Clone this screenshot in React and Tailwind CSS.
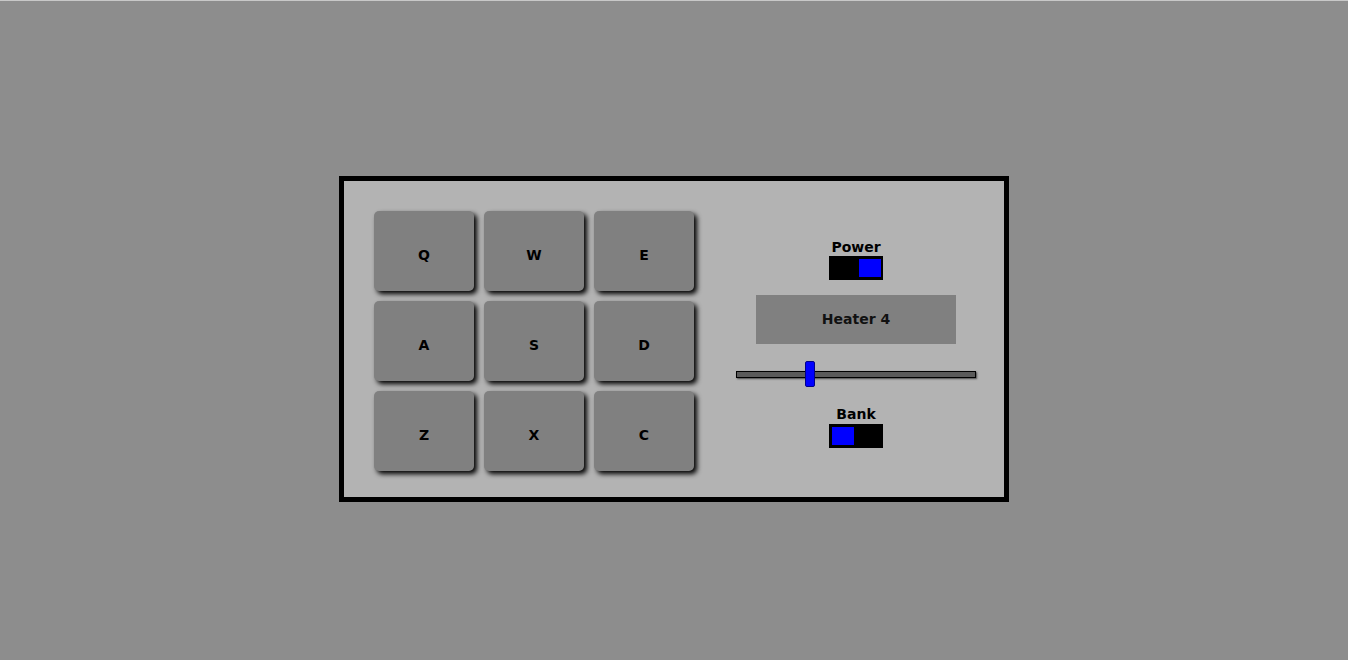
import React from 'react';

const pads = ['Q', 'W', 'E', 'A', 'S', 'D', 'Z', 'X', 'C'];

function Toggle({ on }) {
    return (
        <div className={`w-[54px] h-[24px] bg-black p-[3px] flex ${on ? 'justify-end pr-[2px]' : 'justify-start'}`}>
            <div className="w-[22px] h-[18px] bg-[#0000ff]" />
        </div>
    );
}

function DrumMachine() {
    const volume = 0.3;
    return (
        <div className="border-[5px] border-black">
            <div className="w-[660px] h-[316px] bg-[#b3b3b3] flex">
                {/* pad bank */}
                <div className="w-[350px] shrink-0 pl-[30px] pt-[30px]">
                    <div className="grid grid-cols-[repeat(3,100px)] gap-[10px]">
                        {pads.map(key => (
                            <div
                                key={key}
                                className="w-[100px] h-[80px] pt-[9px] bg-[#808080] rounded-[5px] shadow-[3px_3px_5px_black] flex items-center justify-center text-[14px] font-bold text-black"
                            >
                                {key}
                            </div>
                        ))}
                    </div>
                </div>

                {/* controls */}
                <div className="w-[310px] shrink-0 pl-[14px] pt-[58px] flex flex-col items-center">
                    <p className="text-[14px] leading-[16px] font-bold text-black">Power</p>
                    <div className="mt-[1px]"><Toggle on /></div>
                    <div className="mt-[15px] w-[200px] h-[49px] bg-[#808080] flex items-center justify-center text-[14px] font-bold text-[#111]">
                        Heater 4
                    </div>
                    <div className="mt-[17px] w-[240px] h-[26px] flex items-center relative">
                        <div className="w-full h-[7px] bg-[#5a5a5a] border border-black shadow-[1px_1px_2px_rgba(0,0,0,0.6)]" />
                        <div
                            className="absolute top-0 w-[10px] h-[26px] bg-[#0000ff] border border-[#00008a] rounded-[2px]"
                            style={{ left: `${(240 - 10) * volume}px` }}
                        />
                    </div>
                    <p className="mt-[19px] text-[14px] leading-[16px] font-bold text-black">Bank</p>
                    <div className="mt-[2px]"><Toggle /></div>
                </div>
            </div>
        </div>
    );
}

export default function App() {
    return (
        <div className="min-h-[660px] bg-[#8d8d8d] border-t border-[#c8c8c8] flex justify-center items-start pt-[175px] font-['DejaVu_Sans',sans-serif]">
            <DrumMachine />
        </div>
    );
}
